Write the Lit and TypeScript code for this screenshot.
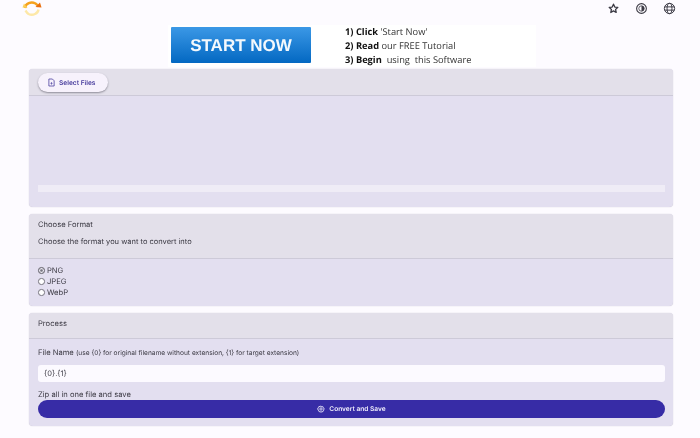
import { LitElement, html, css } from "lit";
import { customElement } from "lit/decorators.js";

@customElement("app-root")
export class AppRoot extends LitElement {
  static styles = css`
    :host { display: block; width: 700px; height: 438px; overflow: hidden; background: #fdfbff; font-family: Inter, "Liberation Sans", sans-serif; color: #46444f; text-rendering: geometricPrecision; filter: blur(0.3px); }
    * { box-sizing: border-box; }
    .top { height: 25px; display: flex; align-items: flex-start; justify-content: space-between; padding: 0 24px 0 22px; }
    .logo { width: 20px; height: 17px; display: block; }
    .icons { display: flex; gap: 15px; padding-top: 2px; }
    .icons svg { width: 13px; height: 13px; display: block; color: #3a3943; }
    .adwrap { display: flex; justify-content: center; height: 44px; padding-left: 4px; }
    .ad { width: 368px; height: 42px; background: #fff; display: flex; padding: 2px 0 0 3px; }
    .start { width: 140px; height: 36px; border-radius: 1px; background: linear-gradient(#3b98e6, #0368c2); color: #f4f9fd; font: bold 17px/37px "Liberation Sans", sans-serif; text-align: center; }
    .steps { margin: -2px 0 0 34px; font: 9.3px/14px "Open Sans", sans-serif; color: #333; white-space: pre; }
    .steps b { color: #111; }
    .card { margin: 0 27px 7px 29px; background: #e3dff0; border-radius: 4px; box-shadow: 0 0 1px #b9b6c4; }
    .head { background: #e3e0ea; border-bottom: 1px solid #cdcad8; border-radius: 4px 4px 0 0; padding: 0 9px; font-size: 8px; }
    .c1 .head { height: 27px; padding-top: 4px; }
    .sel { width: 70px; height: 19px; background: #f7f2fc; border-radius: 10px; box-shadow: 0 1px 2px #8e8c98; display: flex; align-items: center; gap: 4.5px; padding-left: 9.5px; color: #4a3f9e; font-size: 6.6px; font-weight: 600; white-space: nowrap; }
    .sel svg { width: 7px; height: 9px; flex: none; }
    .c1 .body { height: 111px; padding: 89px 8px 0 9px; }
    .bar { height: 7px; background: #efecf6; }
    .c2 .head { height: 45px; padding-top: 5px; }
    .t { font-size: 7.6px; line-height: 11px; color: #3c3a44; }
    .c2 .d { margin-top: 7px; font-size: 7.5px; line-height: 10px; color: #3c3a44; }
    .c2 .body { height: 47px; padding: 6px 9px 0; }
    .r { display: flex; align-items: center; gap: 2.5px; height: 11px; font-size: 7.6px; color: #3c3a44; }
    .dot { width: 6.5px; height: 6.5px; border-radius: 50%; background: #fff; border: 0.7px solid #77757f; flex: none; }
    .dot.on { background: #77757f; box-shadow: inset 0 0 0 1.2px #e8e6f0; }
    .c3 .head { height: 26px; padding-top: 5px; }
    .c3 .body { height: 87px; padding: 8px 8px 0 9px; }
    .fn { font-size: 7.6px; line-height: 11px; color: #3c3a44; white-space: nowrap; }
    .fn small { font-size: 6.6px; }
    .inp { margin-top: 6px; height: 17px; background: #fcfaff; border-radius: 3px; padding: 0 6px; font-size: 7.5px; line-height: 17px; color: #3c3a44; }
    .zip { margin-top: 8px; font-size: 7.6px; line-height: 9px; color: #3c3a44; }
    .go { height: 18px; margin-top: 1px; border-radius: 9px; background: #372ca6; color: #efedfb; display: flex; justify-content: center; align-items: center; gap: 4px; font-size: 6.6px; font-weight: 600; }
    .go svg { width: 8px; height: 8px; }
  `;

  render() {
    return html`
      <div class="top">
        <svg class="logo" viewBox="0 0 20 17" fill="none">
          <path d="M3 8 C3.500 3.500 9 1 13.500 3.500 C15 4.500 15.500 5 16.500 6.500" stroke="#f5a21d" stroke-width="2.4"/>
          <path d="M13.500 7 L19.500 7.500 L18 2.500 Z" fill="#ea6f0e"/>
          <path d="M16.500 9.500 C16 13.500 11 16 6.500 14 C5 13 4.500 12 3.500 10.500" stroke="#fde8a8" stroke-width="2.4"/>
          <path d="M0.500 7.500 L5.500 8 L2 3.500 Z" fill="#fbcf58"/>
        </svg>
        <div class="icons">
          <svg viewBox="0 0 24 24" fill="none" stroke="currentColor" stroke-width="2.400" stroke-linejoin="round"><path d="M12 4l2.400 5.300 5.600.6-4.200 3.800 1.200 5.600-5-2.900-5 2.900 1.200-5.600L4 9.900l5.600-.6z"/></svg>
          <svg viewBox="0 0 24 24" fill="none" stroke="currentColor" stroke-width="2"><circle cx="12" cy="12" r="9"/><path d="M12 7a5 5 0 0 1 0 10z" fill="currentColor" stroke="none"/><circle cx="12" cy="12" r="5" stroke-width="1.400"/></svg>
          <svg viewBox="0 0 24 24" fill="none" stroke="currentColor" stroke-width="1.800"><circle cx="12" cy="12" r="9.500"/><ellipse cx="12" cy="12" rx="4.500" ry="9.500"/><path d="M3 9h18M3 15h18"/></svg>
        </div>
      </div>
      <div class="adwrap">
        <div class="ad">
          <div class="start">START NOW</div>
          <div class="steps"><b>1) Click</b> 'Start Now'
<b>2) Read</b> our FREE Tutorial
<b>3) Begin</b>  using  this Software</div>
        </div>
      </div>
      <div class="card c1">
        <div class="head">
          <div class="sel">
            <svg viewBox="0 0 16 18" fill="none" stroke="#4a3f9e" stroke-width="1.800"><path d="M2 1h8l4 4v12H2z"/><path d="M8 8v6M5.500 11h5" stroke-width="1.400"/></svg>
            Select Files
          </div>
        </div>
        <div class="body"><div class="bar"></div></div>
      </div>
      <div class="card c2">
        <div class="head">
          <div class="t">Choose Format</div>
          <div class="d">Choose the format you want to convert into</div>
        </div>
        <div class="body">
          <div class="r"><span class="dot on"></span>PNG</div>
          <div class="r"><span class="dot"></span>JPEG</div>
          <div class="r"><span class="dot"></span>WebP</div>
        </div>
      </div>
      <div class="card c3">
        <div class="head"><div class="t">Process</div></div>
        <div class="body">
          <div class="fn">File Name <small>(use {0} for original filename without extension, {1} for target extension)</small></div>
          <div class="inp">{0}.{1}</div>
          <div class="zip">Zip all in one file and save</div>
          <div class="go">
            <svg viewBox="0 0 24 24" fill="none" stroke="#efedfb" stroke-width="2.500"><circle cx="12" cy="12" r="3.500"/><path d="M12 2.500l2 3 3.500-.8.9 3.500 3.100 1.800-1.600 2.500 1.600 2.500-3.100 1.800-.9 3.500-3.500-.8-2 3-2-3-3.500.8-.9-3.500-3.100-1.800L3.500 12 1.900 9.500 5 7.700l.9-3.500 3.500.8z"/></svg>
            Convert and Save
          </div>
        </div>
      </div>
    `;
  }
}
